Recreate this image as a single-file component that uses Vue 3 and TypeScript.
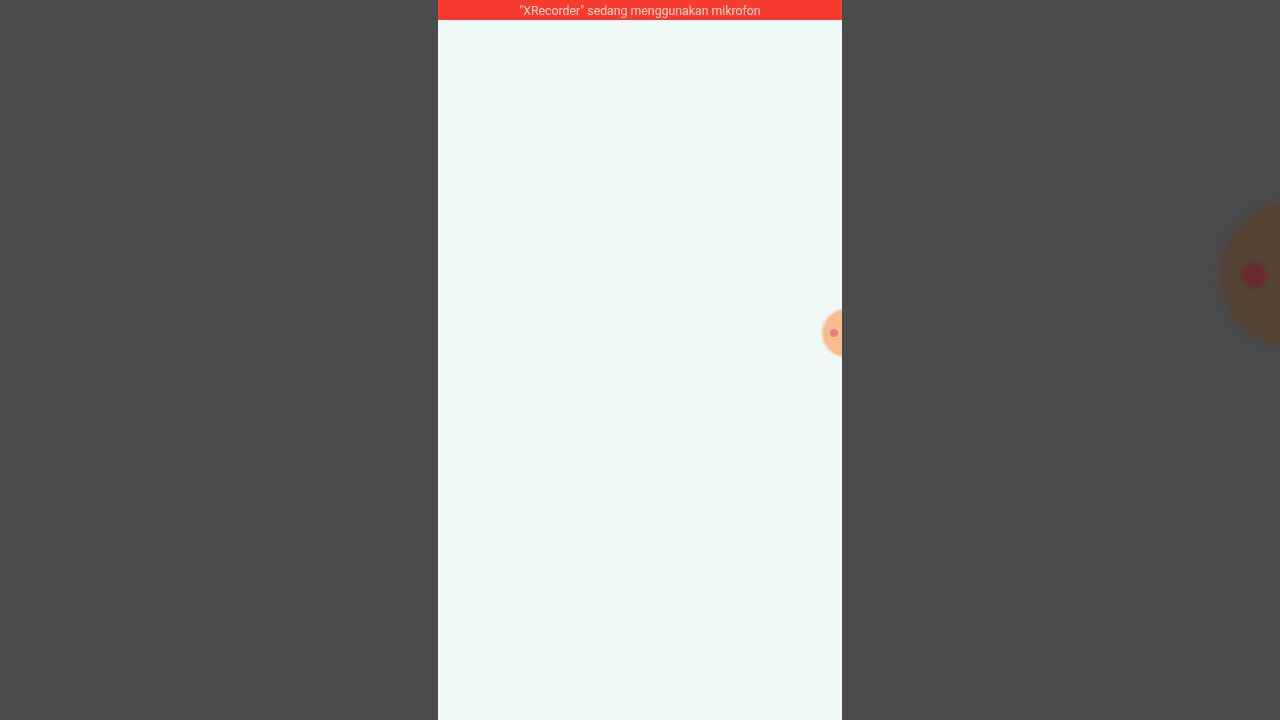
<script setup lang="ts">
const notice: string = '"XRecorder" sedang menggunakan mikrofon'
</script>

<template>
  <div class="stage">
    <aside class="side"></aside>
    <main class="phone">
      <header class="bar">{{ notice }}</header>
      <div class="content"></div>
      <div class="bubble"><span class="dot"></span></div>
    </main>
    <aside class="side side-right">
      <div class="ghost"><span class="ghost-dot"></span></div>
    </aside>
  </div>
</template>

<style>
html, body { margin: 0; background: #4a4b4d; }
</style>

<style scoped>
.stage {
  display: flex;
  width: 1280px;
  height: 720px;
  overflow: hidden;
  background: #4a4b4d;
}
.side {
  flex: 0 0 438px;
  background: #4a4b4d;
  position: relative;
  overflow: hidden;
}
.phone {
  flex: 0 0 404px;
  display: flex;
  flex-direction: column;
  position: relative;
  overflow: hidden;
  background: #eef9f8;
}
.bar {
  height: 20px;
  background: #f83b2f;
  color: #f9d3c9;
  font-family: Roboto, "Liberation Sans", sans-serif;
  font-size: 12.3px;
  line-height: 23px;
  text-align: center;
  white-space: nowrap;
  filter: blur(0.3px);
}
.content { flex: 1; }
.bubble {
  position: absolute;
  left: 385px;
  top: 310px;
  width: 46px;
  height: 46px;
  border-radius: 50%;
  background: #f6bd8f;
  box-shadow: 0 0 1px 2px #f5dcc4;
  filter: blur(0.6px);
}
.dot {
  position: absolute;
  left: 7px;
  top: 19px;
  width: 8px;
  height: 8px;
  border-radius: 50%;
  background: #ee7a7c;
}
.ghost {
  position: absolute;
  left: 380px;
  top: 204px;
  width: 142px;
  height: 142px;
  border-radius: 50%;
  background: #554334;
  box-shadow: 0 0 6px 3px #51473c;
  filter: blur(2px);
}
.ghost-dot {
  position: absolute;
  left: 19px;
  top: 58px;
  width: 26px;
  height: 26px;
  border-radius: 50%;
  background: #692b30;
}
</style>
